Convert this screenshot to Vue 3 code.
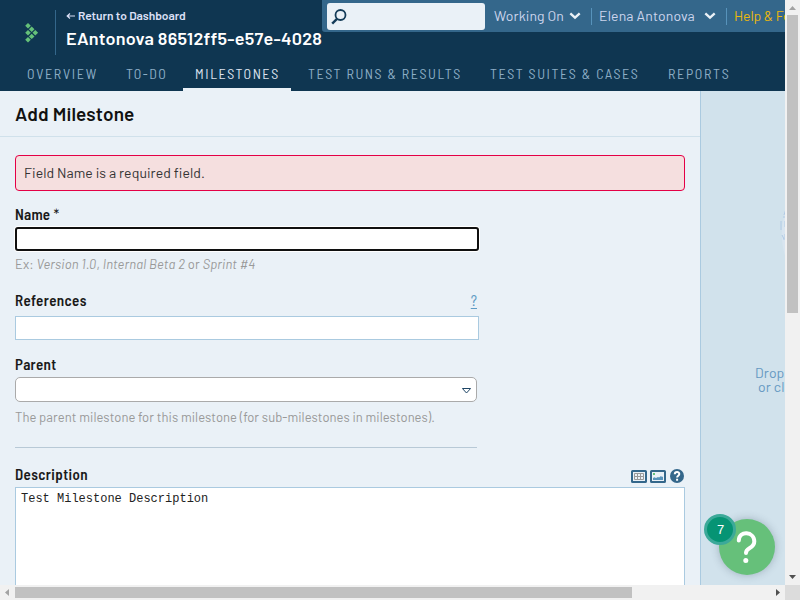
<script setup>
const tabs = [
  { label: 'OVERVIEW', width: 94, spacing: 1.68 },
  { label: 'TO-DO', width: 64, spacing: 1.45 },
  { label: 'MILESTONES', width: 108, spacing: 1.58, active: true },
  { label: 'TEST RUNS & RESULTS', width: 177, spacing: 1.56 },
  { label: 'TEST SUITES & CASES', width: 173, spacing: 1.58 },
  { label: 'REPORTS', width: 86, spacing: 1.65 },
]
</script>

<template>
  <div class="window">
    <div class="page">
      <header class="header">
        <div class="top">
          <div class="logo">
            <svg width="14" height="20" viewBox="0 0 14 20" fill="#65c179">
              <path d="M3 0.1l2.8 2.7L3 5.5.2 2.800zM6.700 3.500l2.800 2.700-2.800 2.700-2.800-2.700zM3 7.100l2.800 2.700L3 12.500.2 9.800zM10.300 7.100l2.800 2.700-2.800 2.700-2.800-2.700zM6.700 10.700l2.800 2.700-2.800 2.700-2.800-2.700zM3 14.100l2.800 2.700L3 19.500.2 16.800z" />
            </svg>
          </div>
          <div class="project">
            <a class="back"><svg width="9" height="8" viewBox="0 0 9 8"><path d="M9 4H1.200M4 1.500L1.200 4 4 6.500" fill="none" stroke="currentColor" stroke-width="1.200" /></svg><span>Return to Dashboard</span></a>
            <div class="project-name">EAntonova 86512ff5-e57e-4028</div>
          </div>
          <div class="toolbar">
            <div class="search">
              <svg width="16" height="16" viewBox="0 0 16 16" fill="none" stroke="#143c59">
                <circle cx="9.500" cy="6" r="5" stroke-width="1.800" />
                <path d="M6 9.800L1.200 14.600" stroke-width="2.400" />
              </svg>
            </div>
            <div class="menu working"><span>Working On</span><svg width="12" height="8" viewBox="0 0 12 8"><path d="M1.300 1.300L6 5.700l4.700-4.400" fill="none" stroke="#eaf1f7" stroke-width="2.300" /></svg></div>
            <div class="menu user"><span>Elena Antonova</span><svg width="12" height="8" viewBox="0 0 12 8"><path d="M1.300 1.300L6 5.700l4.700-4.400" fill="none" stroke="#eaf1f7" stroke-width="2.300" /></svg></div>
            <div class="menu help"><span>Help &amp; Feedback</span></div>
          </div>
        </div>
        <nav class="tabs">
          <a v-for="t in tabs" :key="t.label" class="tab" :class="{ active: t.active }" :style="{ width: t.width + 'px', letterSpacing: t.spacing + 'px' }">{{ t.label }}</a>
        </nav>
      </header>

      <div class="body">
        <main class="main">
          <h1 class="title">Add Milestone</h1>
          <form class="form">
            <div class="error">Field Name is a required field.</div>
            <label class="label name-label">Name <span class="star">*</span></label>
            <div class="input focused"></div>
            <p class="hint example">Ex: <i>Version 1.0</i>, <i>Internal Beta 2</i> or <i>Sprint #4</i></p>
            <div class="label ref-label"><span>References</span><a>?</a></div>
            <div class="input"></div>
            <label class="label parent-label">Parent</label>
            <div class="select">
              <svg width="9" height="6" viewBox="0 0 9 6"><path d="M.4.500h8.200L4.500 5z" fill="#fff" stroke="#1f4666" stroke-width="1" /></svg>
            </div>
            <p class="hint parent-hint">The parent milestone for this milestone (for sub-milestones in milestones).</p>
            <div class="rule"></div>
            <div class="label desc-label">
              <span>Description</span>
              <div class="icons">
                <svg width="16" height="13" viewBox="0 0 16 13">
                  <rect x="1" y="1" width="14" height="11" rx=".6" fill="#eaf1f7" stroke="#34678b" stroke-width="2" />
                  <path d="M3.500 3.500h9v6h-9zM3.500 6.500h9M6.500 3.500v6M9.500 3.500v6" fill="none" stroke="#999" />
                </svg>
                <svg width="16" height="13" viewBox="0 0 16 13">
                  <rect x="1" y="1" width="14" height="11" rx=".6" fill="#eaf1f7" stroke="#34678b" stroke-width="2" />
                  <path d="M3 3h2v2H3z" fill="#65c179" />
                  <path d="M3 10V8l1.500-.7L6 8l2-1 1 .500L11 6l1 1 1-.500V10z" fill="#5793bb" />
                </svg>
                <svg width="14" height="14" viewBox="0 0 14 14">
                  <circle cx="7" cy="7" r="7" fill="#34678b" />
                  <path d="M4.800 5.200C4.800 2.200 9.300 2.300 9.300 5c0 1.700-2.200 1.700-2.200 3.500M7.100 9.800v2" fill="none" stroke="#fff" stroke-width="2" />
                </svg>
              </div>
            </div>
            <div class="textarea">Test Milestone Description</div>
          </form>
        </main>
        <aside class="side">
          <svg class="drop-art" width="7" height="52" viewBox="0 0 7 52" fill="none">
            <path d="M7 0C0 13 0 33 7 52z" fill="#d8e5f0" />
            <path d="M6 -1L4 5M3 7h3M1 11v9M5 11v6M2 25l2 4M5 24v4M3 29h2" stroke="#b0cae4" />
          </svg>
          <div class="drop-text">Drop files here to attach,<br><span class="second">or click to browse</span></div>
        </aside>
      </div>
      <div class="assist">
        <svg width="56" height="56" viewBox="0 0 56 56" fill="none">
          <path d="M19.800 21.500C20 11 35.300 12.300 35.300 22.500C35.300 30 27 28 27 34" stroke="#fff" stroke-width="4" stroke-linecap="round" />
          <circle cx="26.800" cy="41.500" r="2.500" fill="#fff" />
        </svg>
        <div class="badge">7</div>
      </div>
    </div>

    <div class="vbar">
      <svg width="15" height="15" viewBox="0 0 15 15"><path d="M4 10l3.500-4L11 10z" fill="#a3a3a3" /></svg>
      <div class="vthumb"></div>
      <svg class="down" width="15" height="15" viewBox="0 0 15 15"><path d="M4 5h7L7.500 9z" fill="#505050" /></svg>
    </div>
    <div class="hbar">
      <svg width="15" height="15" viewBox="0 0 15 15"><path d="M9 4v7L5 7.500z" fill="#a3a3a3" /></svg>
      <div class="hthumb"></div>
      <svg class="right" width="15" height="15" viewBox="0 0 15 15"><path d="M6 4v7l4-3.500z" fill="#505050" /></svg>
    </div>
    <div class="corner"></div>
  </div>
</template>

<style>
body { overflow: hidden; }
</style>

<style scoped>
* { box-sizing: border-box; }
.window { width: 800px; height: 600px; display: grid; grid-template: 585px 15px / 785px 15px; font-family: Barlow, Roboto, sans-serif; font-size: 14px; color: #1a1a1a; overflow: hidden; }
.page { position: relative; overflow: hidden; background: #eaf1f7; display: flex; flex-direction: column; }
.header { height: 91px; flex: none; background: #0f3651; display: flex; flex-direction: column; }
.top { height: 58px; display: flex; align-items: flex-start; }
.logo { width: 56px; height: 45px; margin-top: 10px; padding: 13px 0 0 25px; border-right: 1px solid #34678b; flex: none; }
.logo svg { display: block; }
.project { width: 266px; padding: 7px 0 0 10px; flex: none; white-space: nowrap; }
.back { display: flex; align-items: center; gap: 3px; height: 16px; font-size: 12px; font-weight: 600; color: #dce0f7; letter-spacing: -0.03px; }
.back svg { margin-top: 2px; }
.project-name { margin-top: 3px; height: 24px; line-height: 24px; font-size: 18px; font-weight: 600; color: #fff; letter-spacing: 0.22px; }
.toolbar { height: 32px; flex: 1; min-width: 0; background: #34678b; border-bottom-left-radius: 3px; display: flex; align-items: center; padding-left: 5px; white-space: nowrap; overflow: hidden; }
.search { width: 158px; height: 27px; background: #eaf1f7; border-radius: 3px; padding: 6px 0 0 4px; flex: none; }
.search svg { display: block; }
.menu { height: 17px; line-height: 15px; display: flex; align-items: center; justify-content: space-between; color: #ccd5ed; letter-spacing: 0.1px; flex: none; }
.menu span { height: 17px; }
.working { width: 87px; margin-left: 9px; }
.user { width: 125px; margin-left: 10px; padding-left: 7px; border-left: 1px solid #5793bb; letter-spacing: 0.16px; }
.help { margin-left: 10px; padding-left: 7px; border-left: 1px solid #5793bb; color: #ecb80a; letter-spacing: -0.1px; }
.tabs { height: 33px; display: flex; gap: 5px; padding-left: 15px; }
.tab { height: 33px; line-height: 32px; padding-left: 12px; flex: none; white-space: nowrap; color: #8cadc5; font-family: "Barlow Semi Condensed", Barlow, Roboto, sans-serif; }
.active { color: #dce3ef; border-bottom: 3px solid #eaf1f7; }
.body { flex: 1; display: flex; min-height: 0; }
.main { width: 700px; flex: none; }
.title { margin: 0; height: 46px; line-height: 46px; padding-left: 15px; border-bottom: 1px solid #d0e1eb; font-size: 19px; font-weight: 600; letter-spacing: 0.15px; color: #111; }
.form { padding: 18px 15px 0; display: flex; flex-direction: column; }
.error { height: 36px; line-height: 34px; padding-left: 8px; border: 1px solid #e40046; border-radius: 4px; background: #f5dfdf; color: #333; letter-spacing: 0.06px; }
.label { height: 16px; line-height: 14px; font-family: "Barlow Semi Condensed", Barlow, Roboto, sans-serif; font-size: 15px; font-weight: 600; letter-spacing: 0.4px; }
.name-label { margin-top: 16px; letter-spacing: 0.2px; }
.star { font-weight: 400; }
.input { width: 464px; height: 24px; background: #fff; border: 1px solid #aacae0; }
.focused { margin-top: 4px; border: 2px solid #101010; border-radius: 3px; box-shadow: 0 0 0 1px #fff; }
.hint { margin: 0; height: 16px; line-height: 14px; font-size: 13px; color: #999; white-space: nowrap; }
.example { margin-top: 6px; letter-spacing: 0.15px; }
.ref-label { width: 462px; margin: 20px 0 7px; display: flex; justify-content: space-between; }
.ref-label a { font-weight: 400; letter-spacing: 0; color: #5f9bc4; text-decoration: underline; text-underline-offset: 2px; }
.parent-label { margin-top: 17px; letter-spacing: 0.3px; }
.select { margin-top: 4px; width: 462px; height: 25px; border: 1px solid #aaa; border-radius: 5px; background: #fff; display: flex; justify-content: flex-end; align-items: center; padding: 2px 5px 0 0; }
.parent-hint { margin-top: 8px; letter-spacing: 0.06px; }
.rule { width: 462px; height: 1px; margin-top: 21px; background: #b8c9d6; }
.desc-label { margin-top: 19px; height: 20px; display: flex; justify-content: space-between; }
.icons { display: flex; gap: 3px; align-items: center; height: 18px; padding-right: 1px; }
.icons svg:last-child { margin-left: 1px; }
.textarea { height: 130px; background: #fff; border: 1px solid #aacae0; padding: 4px 5px; font: 12px/15px "Liberation Mono", monospace; color: #222; }
.side { flex: 1; background: #d1e2ec; border-left: 1px solid #aacae0; overflow: hidden; }
.drop-art { display: block; margin: 119px 0 0 79px; }
.drop-text { margin: 104px 0 0 54px; line-height: 14px; color: #6699c2; white-space: nowrap; letter-spacing: 0.1px; }
.second { padding-left: 3px; }
.assist { position: absolute; left: 719px; top: 519px; width: 56px; height: 56px; border-radius: 50%; background: #66c07a; box-shadow: 0 0 8px rgba(40, 60, 80, .3); }
.assist svg { display: block; }
.badge { position: absolute; left: -15px; top: -5px; width: 32px; height: 31px; border-radius: 50%; border: 3px solid #3ca999; background: #069474; color: #fff; font: 13px/25px "Liberation Sans", sans-serif; text-align: center; padding-left: 1px; }
.vbar { background: #f1f1f1; display: flex; flex-direction: column; }
.vbar svg, .hbar svg { display: block; flex: none; }
.vthumb { margin-left: 2px; width: 11px; height: 298px; background: #c1c1c1; }
.down { margin-top: auto; }
.hbar { background: #f1f1f1; display: flex; align-items: center; }
.hthumb { width: 617px; height: 11px; background: #c1c1c1; }
.right { margin-left: auto; }
.corner { background: #dcdcdc; }
</style>
